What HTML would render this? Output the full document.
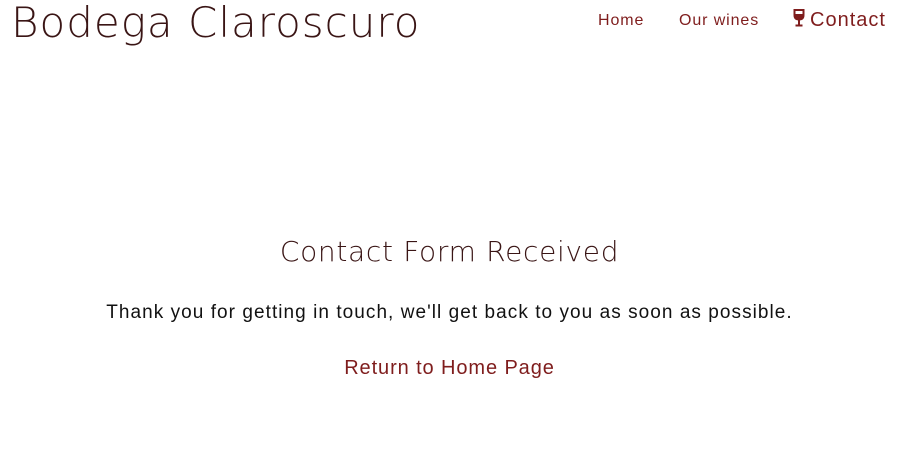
<!DOCTYPE html>
<html><head><meta charset="utf-8"><style>
body{margin:0;width:899px;height:475px;background:#fff;position:relative;overflow:hidden;font-family:"Liberation Sans",sans-serif}
.logo{position:absolute;left:11px;top:-2px;font-family:"DejaVu Sans",sans-serif;font-weight:200;font-size:42px;color:#3a1515;letter-spacing:1px;white-space:nowrap}
.nav a{position:absolute;top:12px;color:#7f1d1d;text-decoration:none;font-size:16px;white-space:nowrap;letter-spacing:0.9px}
h1{position:absolute;left:0;width:899px;top:235px;margin:0;text-align:center;font-family:"DejaVu Sans",sans-serif;font-weight:200;font-size:28px;letter-spacing:0.7px;color:#3a1515}
p{position:absolute;left:0;width:899px;top:302px;margin:0;text-align:center;font-size:19px;letter-spacing:1.05px;color:#111}
.ret{position:absolute;left:0;width:899px;top:357px;text-align:center;font-size:20px;letter-spacing:0.9px;color:#7f1d1d}
</style></head><body>
<div class="logo">Bodega Claroscuro</div>
<div class="nav">
<a style="left:598px">Home</a>
<a style="left:679px">Our wines</a>
<a style="left:793px;top:9px;font-size:20px;letter-spacing:1px"><svg width="12" height="18" viewBox="0 0 12 18" style="vertical-align:-1px;margin-right:5px"><path d="M1.5 1H10.5V6Q10.5 10.5 6 10.5Q1.5 10.5 1.5 6Z" fill="none" stroke="#7f1d1d" stroke-width="2"/><path d="M2 5H10V6.5Q10 10 6 10Q2 10 2 6.5Z" fill="#7f1d1d"/><path d="M6 10.5V16M2.5 16.5H9.5" stroke="#7f1d1d" stroke-width="2"/></svg>Contact</a>
</div>
<h1>Contact Form Received</h1>
<p>Thank you for getting in touch, we'll get back to you as soon as possible.</p>
<div class="ret">Return to Home Page</div>
</body></html>
